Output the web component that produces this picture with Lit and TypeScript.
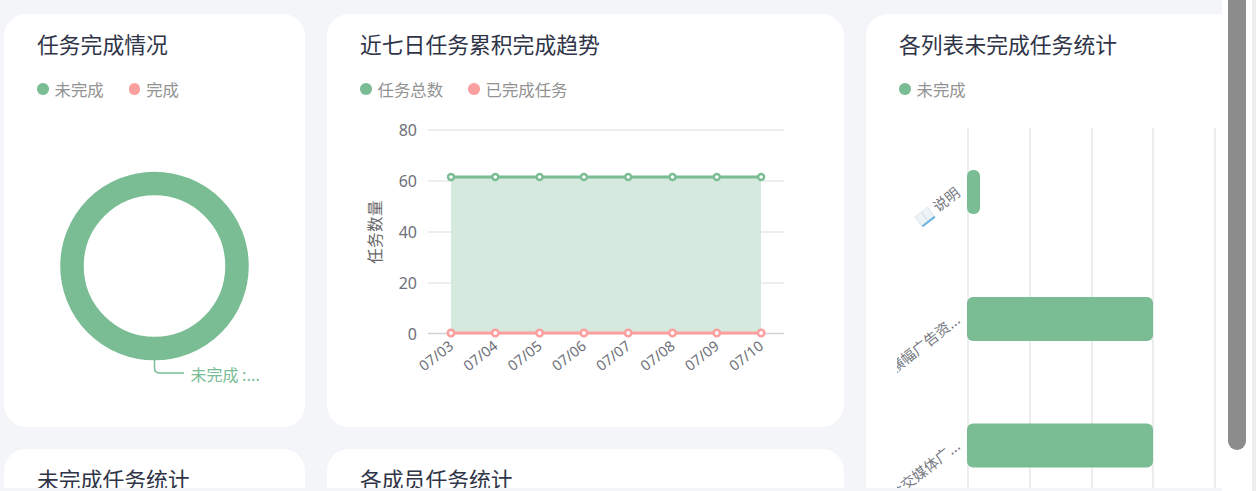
import { LitElement, html, css, svg } from "lit";
import { customElement } from "lit/decorators.js";

const GREEN = "#7abd94";
const PINK = "#fb9f9f";
const dates = ["07/03", "07/04", "07/05", "07/06", "07/07", "07/08", "07/09", "07/10"];
const xs = dates.map((_, i) => 451 + i * 44.3);

@customElement("app-root")
export class AppRoot extends LitElement {
  static styles = css`
    :host {
      display: flex;
      width: 1256px;
      height: 491px;
      overflow: hidden;
      background: #f3f5f9;
      font-family: "Noto Sans CJK SC", "Noto Sans", sans-serif;
    }
    .main {
      flex: 0 0 1222px;
      height: 488px;
      box-sizing: border-box;
      padding: 14px 0 0 4px;
      overflow: hidden;
      display: grid;
      grid-template-columns: 301px 517px 420px;
      grid-template-rows: 413px 300px;
      column-gap: 22px;
      row-gap: 22px;
    }
    .card {
      background: #fff;
      border-radius: 22px;
      padding: 16px 0 0 33px;
      box-sizing: border-box;
      min-width: 0;
    }
    .tall { grid-column: 3; grid-row: 1 / span 2; }
    h3 {
      margin: 0;
      font-size: 21.8px;
      font-weight: 400;
      line-height: 28px;
      color: #2f3447;
    }
    .legend {
      display: flex;
      gap: 25px;
      margin-top: 21px;
      height: 20px;
      align-items: center;
      font-size: 16.4px;
      color: #939393;
    }
    .item { display: flex; align-items: center; gap: 6px; }
    .dot { width: 11.5px; height: 11.5px; border-radius: 50%; }
    .g { background: #7abd94; }
    .p { background: #fb9f9f; }
    .chart { display: block; margin: 1px 0 0 -33px; }
    .track {
      flex: 0 0 30px;
      background: #fff;
      display: flex;
      justify-content: center;
    }
    .thumb {
      width: 18px;
      height: 450px;
      background: #8c8c8c;
      border-radius: 0 0 9px 9px;
    }
    .edge { flex: 1; background: #ededed; }
    .ax { font-family: "Noto Sans", sans-serif; fill: #6e7079; }
    .lbl { font-size: 14.5px; fill: #777a82; }
  `;

  private legend(items: [string, string][]) {
    return html`<div class="legend">
      ${items.map(([c, t]) => html`<div class="item"><span class="dot ${c}"></span><span>${t}</span></div>`)}
    </div>`;
  }

  private donut() {
    return html`<svg class="chart" width="301" height="327" viewBox="4 100 301 327">
      <circle cx="154.5" cy="266" r="82.5" fill="none" stroke=${GREEN} stroke-width="23.5"></circle>
      <path d="M154.5 360V368Q154.5 373 160 373H184" fill="none" stroke=${GREEN} stroke-width="1.5"></path>
      <text x="190.5" y="381" font-size="16" fill=${GREEN}>未完成 :...</text>
    </svg>`;
  }

  private line() {
    const ticks: [string, number][] = [["80", 130], ["60", 181], ["40", 232], ["20", 283], ["0", 333.5]];
    return html`<svg class="chart" width="517" height="327" viewBox="327 100 517 327">
      ${ticks.map(([t, y]) => svg`
        <line x1="428" x2="784" y1=${y} y2=${y} stroke=${t === "0" ? "#d0d2d8" : "#e6e7ea"} stroke-width="1.4"></line>
        <text class="ax" x="417" y=${y + 6} text-anchor="end" font-size="16">${t}</text>`)}
      <text x="0" y="0" font-size="15.5" fill="#666" text-anchor="middle" letter-spacing="0.4" transform="translate(381 232) rotate(-90)">任务数量</text>
      <rect x="451" y="177" width="310" height="156" fill="#d5e9de"></rect>
      <line x1="451" x2="761" y1="177" y2="177" stroke=${GREEN} stroke-width="3"></line>
      <line x1="451" x2="761" y1="333" y2="333" stroke=${PINK} stroke-width="3"></line>
      ${xs.map((x) => svg`
        <circle cx=${x} cy="177" r="3" fill="#fff" stroke=${GREEN} stroke-width="2.4"></circle>
        <circle cx=${x} cy="333" r="3.2" fill="#fff" stroke=${PINK} stroke-width="2.6"></circle>`)}
      ${dates.map((d, i) => svg`
        <text class="ax" font-size="14.5" text-anchor="end" transform="translate(${xs[i] + 3.5} 348) rotate(-38)">${d}</text>`)}
    </svg>`;
  }

  private bars() {
    const grid = [968, 1030, 1092, 1153, 1215];
    const bars: [number, number, number][] = [[170, 13, 44], [297, 186, 44], [423.5, 186, 44]];
    return html`<svg class="chart" width="420" height="388" viewBox="866 100 420 388">
      <defs><clipPath id="c"><rect x="897" y="100" width="400" height="400"></rect></clipPath></defs>
      ${grid.map((x) => svg`<line x1=${x} x2=${x} y1="128" y2="488" stroke="#e6e7ea" stroke-width="1.5"></line>`)}
      ${bars.map(([y, w, h]) => svg`<rect x="967" y=${y} width=${w} height=${h} rx="6" fill=${GREEN}></rect>`)}
      <g clip-path="url(#c)">
        <g transform="translate(958 191) rotate(-38)">
          <text class="lbl" text-anchor="end" y="5">说明</text>
          <g transform="translate(-50 -6)">
            <rect x="0" y="0" width="16" height="11" fill="#eef3f8" stroke="#cfdbe6" stroke-width="0.6"></rect>
            <line x1="8" x2="8" y1="0" y2="11" stroke="#c9d4de" stroke-width="0.8"></line>
            <line x1="0" x2="16" y1="12" y2="12" stroke="#6db3e0" stroke-width="2"></line>
          </g>
        </g>
        <text class="lbl" text-anchor="end" transform="translate(958 318) rotate(-38) translate(0 5)">横幅广告资...</text>
        <text class="lbl" text-anchor="end" transform="translate(958 444) rotate(-38) translate(0 5)">社交媒体广...</text>
      </g>
    </svg>`;
  }

  render() {
    return html`
      <div class="main">
        <section class="card">
          <h3>任务完成情况</h3>
          ${this.legend([["g", "未完成"], ["p", "完成"]])}
          ${this.donut()}
        </section>
        <section class="card">
          <h3>近七日任务累积完成趋势</h3>
          ${this.legend([["g", "任务总数"], ["p", "已完成任务"]])}
          ${this.line()}
        </section>
        <section class="card tall">
          <h3>各列表未完成任务统计</h3>
          ${this.legend([["g", "未完成"]])}
          ${this.bars()}
        </section>
        <section class="card"><h3>未完成任务统计</h3></section>
        <section class="card"><h3>各成员任务统计</h3></section>
      </div>
      <div class="track"><div class="thumb"></div></div>
      <div class="edge"></div>
    `;
  }
}
